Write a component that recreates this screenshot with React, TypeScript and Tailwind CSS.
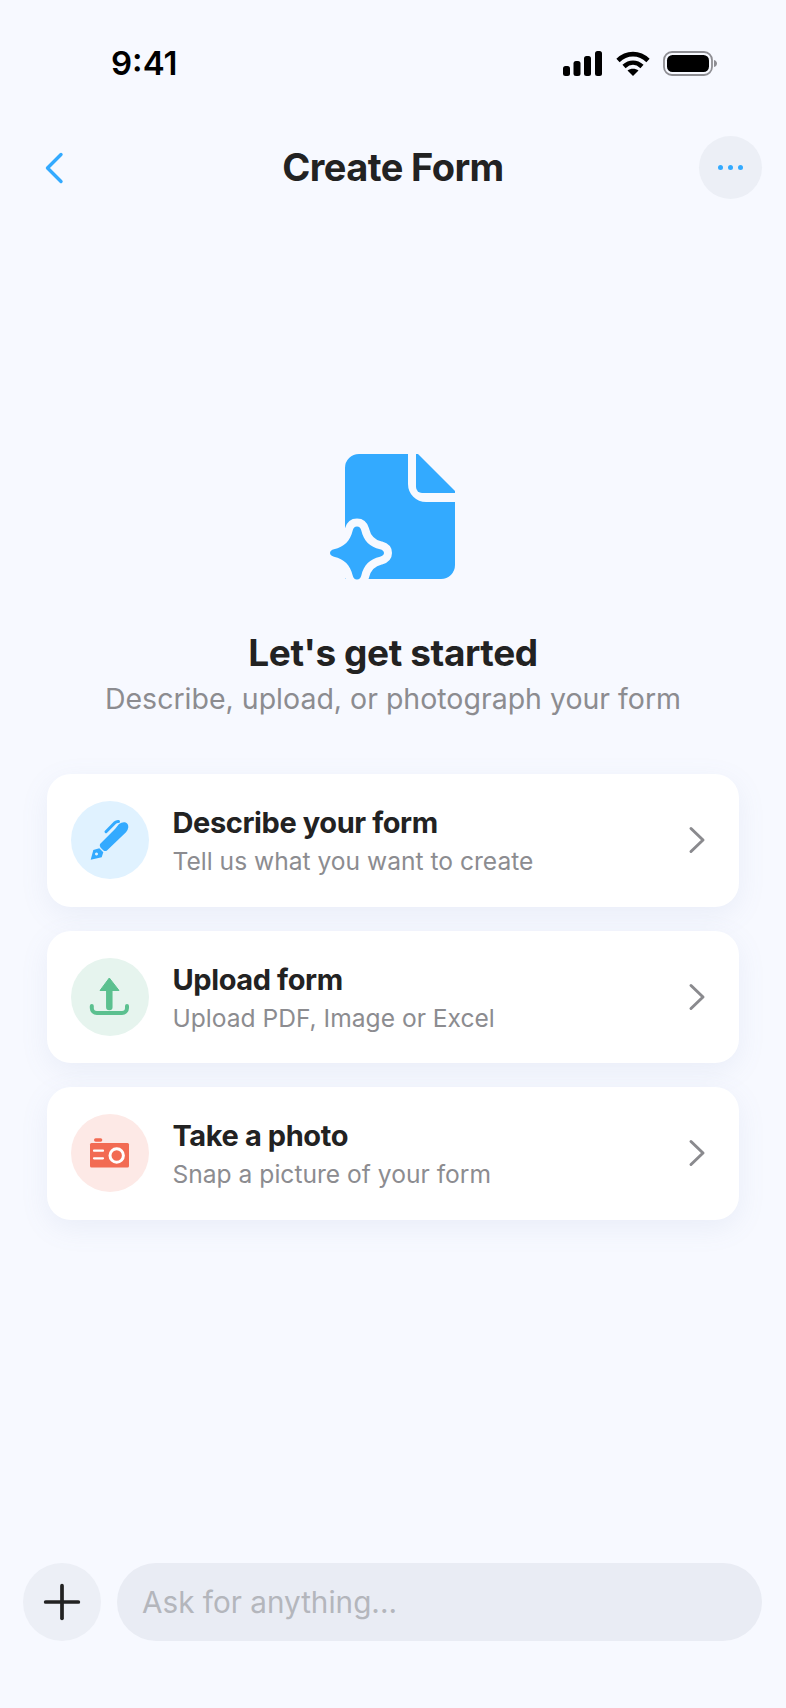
import { Plus } from 'lucide-react'
import type { ReactNode } from 'react'

function StatusBar() {
  return (
    <div className="h-[136px] pt-[44px] pl-[111px] pr-[69px] flex items-start justify-between">
      <div className="text-[33px] leading-[38px] font-semibold text-black">9:41</div>
      <div className="flex items-center gap-[14px] mt-[7px]">
        <svg width="39" height="25" viewBox="0 0 39 25" fill="#000">
          <rect x="0" y="15" width="7" height="10" rx="2.5" />
          <rect x="10.5" y="10" width="7" height="15" rx="2.5" />
          <rect x="21" y="5" width="7" height="20" rx="2.5" />
          <rect x="32" y="0" width="7" height="25" rx="2.5" />
        </svg>
        <svg width="34" height="25" viewBox="0 0 34 25" fill="none" stroke="#000" strokeWidth="4.6">
          <path d="M2 9.5C10.5 1 23.5 1 32 9.5" />
          <path d="M8 15.5C13.5 10.5 20.5 10.5 26 15.5" />
          <path d="M17 25L11.5 19.5C14.5 17 19.5 17 22.5 19.5Z" fill="#000" stroke="none" />
        </svg>
        <svg width="54" height="25" viewBox="0 0 54 25" fill="none" className="-ml-[1px]">
          <rect x="1" y="1" width="48" height="23" rx="8" stroke="#8e8e93" strokeWidth="1.8" />
          <rect x="4" y="4" width="42" height="17" rx="5.5" fill="#000" />
          <path d="M51 9c2 .5 3 2 3 3.500s-1 3-3 3.500z" fill="#8e8e93" />
        </svg>
      </div>
    </div>
  )
}

function Header() {
  return (
    <div className="grid grid-cols-[1fr_auto_1fr] items-center h-[63px] px-[24px]">
      <svg width="20" height="32" viewBox="0 0 20 32" fill="none" className="ml-[20px]">
        <path d="M17 2.500L3.500 16L17 29.500" stroke="#33aaff" strokeWidth="3.400" strokeLinecap="round" strokeLinejoin="round" />
      </svg>
      <div className="pb-[2px] text-[38px] leading-[44px] font-bold text-[#222] tracking-[-0.6px]">Create Form</div>
      <div className="justify-self-end w-[63px] h-[63px] rounded-full bg-[#eceff6] flex items-center justify-center gap-[5px]">
        <span className="w-[5px] h-[5px] rounded-full bg-[#33aaff]" />
        <span className="w-[5px] h-[5px] rounded-full bg-[#33aaff]" />
        <span className="w-[5px] h-[5px] rounded-full bg-[#33aaff]" />
      </div>
    </div>
  )
}

function DocIcon() {
  return (
    <svg width="140" height="140" viewBox="0 0 140 140" className="ml-[14px]">
      <path d="M15 18a14 14 0 0 1 14-14H78V34a18 18 0 0 0 18 18H125V115a14 14 0 0 1-14 14H15Z" fill="#33aaff" />
      <path d="M86 4H88L125 41V43H92a6 6 0 0 1-6-6Z" fill="#33aaff" />
      <path
        d="M27 76.500c2.400 0 3.600 1.500 4.300 4 2.500 10.500 8.500 16.500 18.700 18.800 2.500.7 4 1.900 4 3.700s-1.500 3-4 3.700c-10.200 2.300-16.200 8.300-18.700 18.800-.7 2.500-1.900 4-4.300 4s-3.600-1.500-4.300-4c-2.500-10.500-8.500-16.500-18.700-18.800-2.500-.7-4-1.900-4-3.700s1.500-3 4-3.700c10.200-2.300 16.200-8.300 18.700-18.800.7-2.500 1.900-4 4.300-4Z"
        fill="#33aaff"
        stroke="#f7f9ff"
        strokeWidth="16"
        paintOrder="stroke"
        strokeLinejoin="round"
      />
    </svg>
  )
}

function PenIcon() {
  return (
    <svg width="78" height="78" viewBox="0 0 78 78" fill="none">
      <path d="M29 43L44 28L48 23Q51 20.800 54 21.300Q57.500 22.500 57.300 26.300Q57 29 55 31.300L35.700 49.700Q34 50.500 32.500 49.500L29.500 46.500Q28.300 44.500 29 43Z" fill="#33aaff" />
      <path d="M35 30.700L44 21.700Q45.500 20.300 47.500 20.500" stroke="#33aaff" strokeWidth="3" strokeLinecap="round" />
      <path fillRule="evenodd" d="M19.700 58.700L22.300 49L28.300 47.300L32.300 51.300L30.700 56.300ZM25.500 51.500a1.500 1.500 0 1 0 .01 0Z" fill="#33aaff" />
    </svg>
  )
}

function UploadIcon() {
  return (
    <svg width="78" height="78" viewBox="0 0 78 78" fill="none">
      <path d="M38.300 20L48 32.500H29Z" fill="#5bc08f" stroke="#5bc08f" strokeWidth="1" strokeLinejoin="round" />
      <path d="M38.300 30V49" stroke="#5bc08f" strokeWidth="6.500" strokeLinecap="round" />
      <path d="M20.800 48V50a5 5 0 0 0 5 5H51a5 5 0 0 0 5-5V48" stroke="#5bc08f" strokeWidth="4" strokeLinecap="round" />
    </svg>
  )
}

function CameraIcon() {
  return (
    <svg width="78" height="78" viewBox="0 0 78 78" fill="none">
      <rect x="23" y="24.300" width="8.300" height="3.500" rx="1.700" fill="#f26b53" />
      <rect x="19" y="29" width="39" height="24.500" rx="1.500" fill="#f26b53" />
      <path d="M23 36.700H32M23 44.300H32" stroke="#fff" strokeWidth="2.200" strokeLinecap="round" />
      <circle cx="45.700" cy="41.500" r="6.700" stroke="#fff" strokeWidth="3" />
    </svg>
  )
}

function OptionCard({ icon, tint, title, sub }: { icon: ReactNode; tint: string; title: string; sub: string }) {
  return (
    <div className="h-[132.500px] rounded-[24px] bg-white shadow-[0_8px_28px_rgba(120,140,190,0.1)] flex items-center pl-[24px] pr-[33px]">
      <div className={`w-[78px] h-[78px] rounded-full shrink-0 ${tint}`}>{icon}</div>
      <div className="ml-[23.500px] mt-[4px] flex-1">
        <div className="text-[29px] leading-[38px] font-bold text-[#222] tracking-[-0.4px]">{title}</div>
        <div className="text-[24.6px] leading-[38px] text-[#8c8c90]">{sub}</div>
      </div>
      <svg width="18" height="28" viewBox="0 0 18 28" fill="none">
        <path d="M3 2.500L15 14L3 25.500" stroke="#8a8a8e" strokeWidth="3" strokeLinecap="round" strokeLinejoin="round" />
      </svg>
    </div>
  )
}

export default function App() {
  return (
    <div className="w-[786px] h-[1708px] bg-[#f7f9ff] flex flex-col font-['Inter',sans-serif]">
      <StatusBar />
      <Header />
      <div className="mt-[251px] flex flex-col items-center">
        <DocIcon />
        <div className="mt-[40px] text-[37px] leading-[46px] font-bold text-[#222] tracking-[-0.4px]">Let's get started</div>
        <div className="mt-[1px] text-[28.5px] leading-[44px] text-[#8c8c90]">Describe, upload, or photograph your form</div>
      </div>
      <div className="mt-[53px] mx-[47px] flex flex-col gap-[24px]">
        <OptionCard icon={<PenIcon />} tint="bg-[#e0f2ff]" title="Describe your form" sub="Tell us what you want to create" />
        <OptionCard icon={<UploadIcon />} tint="bg-[#e6f4ee]" title="Upload form" sub="Upload PDF, Image or Excel" />
        <OptionCard icon={<CameraIcon />} tint="bg-[#fde9e6]" title="Take a photo" sub="Snap a picture of your form" />
      </div>
      <div className="mt-auto mb-[67px] pl-[23px] pr-[24px] flex items-center gap-[16px]">
        <div className="w-[78px] h-[78px] rounded-full bg-[#eceff6] flex items-center justify-center shrink-0">
          <Plus size={56} strokeWidth={1.6} className="text-[#222]" />
        </div>
        <div className="flex-1 h-[78px] rounded-full bg-[#e9ecf4] flex items-center pl-[25px] text-[29.7px] text-[#b4b6bc]">Ask for anything...</div>
      </div>
    </div>
  )
}
